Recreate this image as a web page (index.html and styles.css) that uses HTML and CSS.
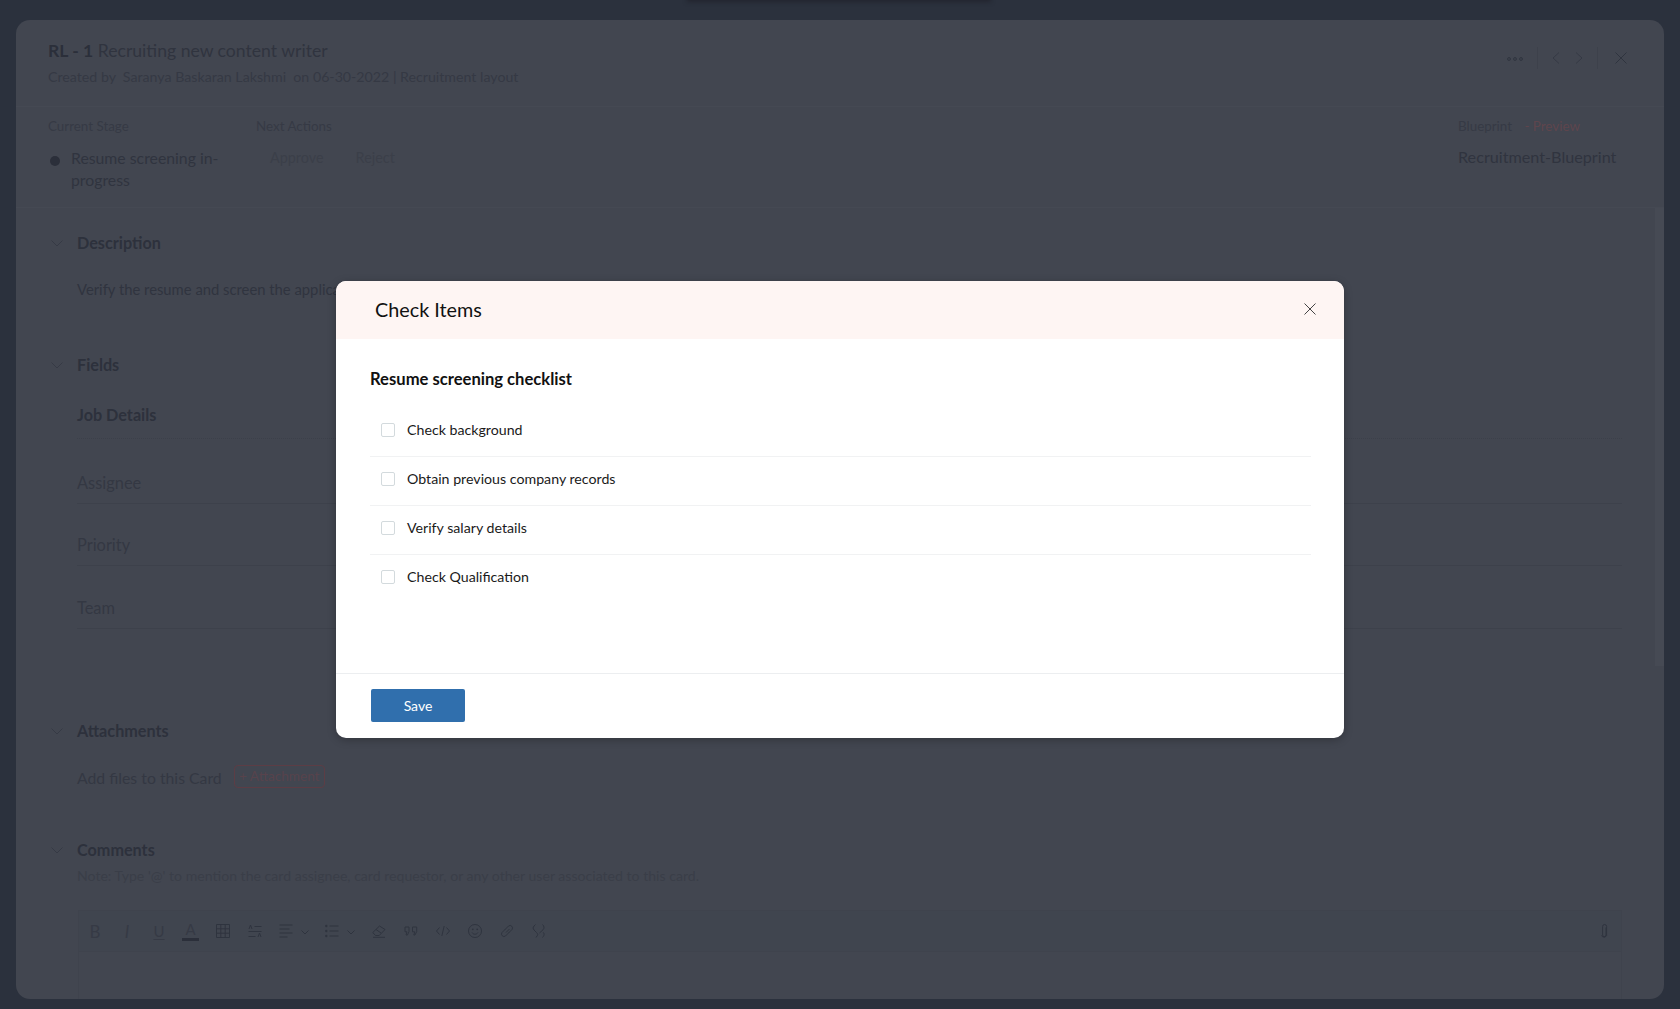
FILE: index.html
```html
<!DOCTYPE html>
<html lang="en">
<head>
<meta charset="utf-8">
<title>Check Items</title>
<link rel="stylesheet" href="styles.css">
</head>
<body>
<div class="top-shadow"></div>
<main class="card">
  <header class="card-head">
    <div>
      <h1 class="title"><b>RL - 1</b> Recruiting new content writer</h1>
      <p class="sub">Created by&nbsp; Saranya Baskaran Lakshmi&nbsp; on 06-30-2022 | Recruitment layout</p>
    </div>
    <div class="head-actions">
      <svg class="ic dots" viewBox="0 0 16 4"><circle cx="2" cy="2" r="1.4"/><circle cx="8" cy="2" r="1.4"/><circle cx="14" cy="2" r="1.4"/></svg>
      <span class="vsep"></span>
      <svg class="ic nav" viewBox="0 0 8 12"><path d="M7 .5 1 6l6 5.500"/></svg>
      <svg class="ic nav" viewBox="0 0 8 12"><path d="M1 .5 7 6l-6 5.500"/></svg>
      <span class="vsep"></span>
      <svg class="ic cross" viewBox="0 0 12 12"><path d="M.5.5l11 11M11.500.5l-11 11"/></svg>
    </div>
  </header>
  <section class="stage">
    <div>
      <div class="label">Current Stage</div>
      <div class="stage-val"><span class="bullet"></span><span>Resume screening in-<br>progress</span></div>
    </div>
    <div>
      <div class="label">Next Actions</div>
      <div class="actions"><span>Approve</span><span>Reject</span></div>
    </div>
    <div>
      <div class="label">Blueprint <span class="preview">- Preview</span></div>
      <div class="bp-val">Recruitment-Blueprint</div>
    </div>
  </section>
  <div class="content">
    <div class="scroll-thumb"></div>
    <h2 class="sec first"><svg class="ic chev" viewBox="0 0 12 7"><path d="M.5.5 6 6 11.500.5"/></svg>Description</h2>
    <p class="desc">Verify the resume and screen the applicant</p>
    <h2 class="sec fields"><svg class="ic chev" viewBox="0 0 12 7"><path d="M.5.5 6 6 11.500.5"/></svg>Fields</h2>
    <h3 class="group">Job Details</h3>
    <div class="field">Assignee</div>
    <div class="field">Priority</div>
    <div class="field">Team</div>
    <h2 class="sec attach"><svg class="ic chev" viewBox="0 0 12 7"><path d="M.5.5 6 6 11.500.5"/></svg>Attachments</h2>
    <div class="attach-row"><span class="attach-text">Add files to this Card</span><span class="attach-btn">+ Attachment</span></div>
    <h2 class="sec comments"><svg class="ic chev" viewBox="0 0 12 7"><path d="M.5.5 6 6 11.500.5"/></svg>Comments</h2>
    <p class="note">Note: Type '@' to mention the card assignee, card requestor, or any other user associated to this card.</p>
    <div class="editor">
      <div class="toolbar">
        <span class="tool glyph">B</span>
        <span class="tool glyph ital">I</span>
        <span class="tool glyph under">U</span>
        <span class="tool glyph color">A</span>
        <span class="tool"><svg class="ic t" viewBox="0 0 14 14"><path d="M.5.5h13v13H.5zM.5 4.800h13M.5 9.200h13M4.800.5v13M9.200.5v13"/></svg></span>
        <span class="tool"><svg class="ic t" viewBox="0 0 14 14"><path d="M1 5l1.500-4L4 5M6.500 2.500h7M.5 7.500h13M.5 12.500h7M10 13l1.500-4 1.500 4"/></svg></span>
        <span class="tool wide"><svg class="ic t" viewBox="0 0 14 14"><path d="M.5 1h13M.5 5h10M.5 9h13M.5 13h8"/></svg><svg class="ic mini" viewBox="0 0 8 5"><path d="M.5.5 4 4 7.500.5"/></svg></span>
        <span class="tool wide"><svg class="ic t" viewBox="0 0 14 14"><path d="M4.500 2h9M4.500 7h9M4.500 12h9"/><circle class="fill" cx="1.300" cy="2" r="1.200"/><circle class="fill" cx="1.300" cy="7" r="1.200"/><circle class="fill" cx="1.300" cy="12" r="1.200"/></svg><svg class="ic mini" viewBox="0 0 8 5"><path d="M.5.5 4 4 7.500.5"/></svg></span>
        <span class="tool"><svg class="ic t" viewBox="0 0 14 14"><path d="M.8 8.500 7.500 2l5.500 3.500-5.800 6H3.500zM4 5.500l5 3.500M1 13.300h12"/></svg></span>
        <span class="tool"><svg class="ic t" viewBox="0 0 14 14"><path d="M1 3h4v4.500L3.500 11H2l1-3.200H1zM8.500 3h4.200v4.500L11 11H9.800l1-3.200H8.500z"/></svg></span>
        <span class="tool"><svg class="ic t" viewBox="0 0 14 14"><path d="M3.500 3.500.5 7l3 3.500M10.500 3.500l3 3.500-3 3.500M8.200 2 5.800 12"/></svg></span>
        <span class="tool"><svg class="ic t" viewBox="0 0 14 14"><circle cx="7" cy="7" r="6.500"/><circle class="fill" cx="4.800" cy="5.300" r=".9"/><circle class="fill" cx="9.200" cy="5.300" r=".9"/><path d="M4 8.500c1.500 2.300 4.500 2.300 6 0"/></svg></span>
        <span class="tool"><svg class="ic t" viewBox="0 0 14 14"><path d="M6 8.500l3.500-3.500M5.500 5 2 8.500a2.500 2.500 0 0 0 3.500 3.500L9 8.500M5 5.500 8.500 2A2.500 2.500 0 0 1 12 5.500L8.500 9"/></svg></span>
        <span class="tool"><svg class="ic t" viewBox="0 0 14 14"><path d="M3.500.5 2 2a2.800 2.800 0 0 0 0 4l2.500 2.500c1.500 1.500 1.500 2.500.5 3.500l-1 1.500M10.500.5c1.800 1.500 2 3.800.5 5.300L7.500 9M10.500 13.500l.8-1c1.200-1.500 1-3-.1-4.200"/></svg></span>
        <svg class="ic clip" viewBox="0 0 7 16"><path d="M5 4.500v7.500a1.700 1.700 0 0 1-3.400 0V3.500a2 2 0 0 1 4 0v9a2.800 2.800 0 0 1-5.100 0"/></svg>
      </div>
    </div>
  </div>
</main>
<div class="modal">
  <div class="modal-head">
    <h2 class="modal-title">Check Items</h2>
    <svg class="modal-close" viewBox="0 0 12 12"><path d="M.5.5l11 11M11.500.5l-11 11"/></svg>
  </div>
  <div class="modal-body">
    <h3 class="list-title">Resume screening checklist</h3>
    <ul class="list">
      <li><span class="box"></span>Check background</li>
      <li><span class="box"></span>Obtain previous company records</li>
      <li><span class="box"></span>Verify salary details</li>
      <li><span class="box"></span>Check Qualification</li>
    </ul>
  </div>
  <div class="modal-foot"><button class="save">Save</button></div>
</div>
</body>
</html>
```
FILE: styles.css
```css
* { box-sizing: border-box; }
html, body { height: 100%; margin: 0; }
body {
  background: #2b313d;
  padding: 20px 16px 10px;
  overflow: hidden;
  font-family: Lato, "Open Sans", sans-serif;
  color: #2f343f;
}
h1, h2, h3, p, ul { margin: 0; padding: 0; }
.top-shadow {
  position: absolute; left: 688px; top: -12px; width: 302px; height: 12px;
  background: #23252f; box-shadow: 0 1px 4px 1px #23252f;
}
.card {
  height: 979px; background: #424650; border-radius: 14px; overflow: hidden;
  display: flex; flex-direction: column;
}
.ic { fill: none; stroke: #2f343f; stroke-width: 1; display: block; }
.ic .fill { fill: #2f343f; stroke: none; }

.card-head {
  height: 87px; flex: none; padding: 19px 32px 0; display: flex; justify-content: space-between;
  border-bottom: 1px solid #454953;
}
.title { font-size: 17.6px; line-height: 24px; font-weight: 400; color: #30343f; }
.title b { font-weight: 700; color: #2b2f3a; }
.sub { font-size: 14.2px; line-height: 20px; margin-top: 4px; color: #353944; }
.head-actions { display: flex; align-items: center; height: 20px; margin-top: 9px; padding-right: 5px; }
.dots { width: 16px; height: 4px; margin-top: 2px; }
.dots circle { stroke-width: 1; fill: none; stroke: #2f343f; }
.vsep { width: 1px; height: 22px; background: #3d414b; margin: 0 14px; }
.nav { width: 8px; height: 12px; stroke: #363a45; }
.nav + .nav { margin-left: 15px; }
.nav + .vsep { margin: 0 17px 0 14px; }
.cross { width: 12px; height: 12px; stroke: #2f343f; }

.stage {
  height: 101px; flex: none; padding: 10px 0 0 32px; display: grid; grid-template-columns: 208px 1fr 206px;
  border-bottom: 1px solid #454953;
}
.label { font-size: 13.4px; line-height: 18px; color: #363a45; }
.preview { color: #5e454d; margin-left: 9px; }
.stage-val { display: flex; margin-top: 12px; font-size: 15.8px; line-height: 22px; color: #30343f; }
.bullet { width: 10px; height: 10px; border-radius: 50%; background: #2b2f3a; margin: 9px 11px 0 2px; flex: none; }
.actions { display: flex; margin-top: 12px; font-size: 14.4px; line-height: 22px; color: #3b3f49; padding-left: 14px; gap: 32px; }
.bp-val { font-size: 16.2px; line-height: 22px; margin-top: 11px; color: #30343f; }

.content { position: relative; flex: 1; padding: 24px 42px 0 61px; min-height: 0; }
.scroll-thumb { position: absolute; right: 0; top: 0; width: 9px; height: 458px; background: #464a54; }
.sec { position: relative; font-size: 16.2px; line-height: 22px; font-weight: 700; color: #2d313c; }
.chev { position: absolute; left: -26px; top: 8px; width: 12px; height: 7px; stroke: #363a45; }
.desc { margin-top: 24px; font-size: 14.8px; line-height: 22px; color: #30343f; }
.fields { margin-top: 54px; }
.group {
  margin-top: 28px; font-size: 16.2px; line-height: 22px; font-weight: 700; color: #2d313c;
  padding-bottom: 12px; border-bottom: 1px dotted #3c404a; margin-bottom: 2px;
}
.field { height: 62.5px; display: flex; align-items: flex-end; padding-bottom: 9px; font-size: 16.4px; line-height: 22px; color: #343843; border-bottom: 1px solid #3d414b; }
.attach { margin-top: 91.5px; }
.attach-row { display: flex; align-items: center; margin-top: 22px; gap: 12px; }
.attach-text { font-size: 15.8px; line-height: 22px; color: #343843; margin-top: 3px; }
.attach-btn { height: 23px; width: 91px; text-align: center; border: 1px solid #5c3d45; border-radius: 4px; font-size: 13.6px; line-height: 21px; color: #57434c; }
.comments { margin-top: 50px; }
.note { margin-top: 6px; font-size: 14.1px; line-height: 18px; color: #3a3e48; }
.editor { margin-top: 25px; height: 100px; border: 1px solid #3f434d; margin-left: 1px; }
.toolbar { height: 41px; background: #40454f; border-bottom: 1px solid #3f434d; display: flex; align-items: center; padding-right: 10px; }
.tool { width: 32px; display: flex; justify-content: center; align-items: center; height: 20px; }
.tool.wide { width: 46px; justify-content: flex-start; padding-left: 8px; gap: 8px; }
.t { width: 14px; height: 14px; }
.mini { width: 8px; height: 5px; margin-top: 2px; }
.glyph { font-size: 17px; color: #363a45; }
.ital { font-style: italic; }
.under { text-decoration: underline; text-underline-offset: 2px; text-decoration-thickness: 1px; font-size: 15px; }
.color { font-size: 15px; border-bottom: 3px solid #2b2f3a; height: 19px; width: 17px; margin: 0 8px 0 7px; align-items: flex-end; line-height: 14px; padding-bottom: 2px; }
.clip { width: 7px; height: 16px; margin-left: auto; stroke: #2f343f; margin-right: 3px; }

.modal {
  position: absolute; left: 336px; top: 281px; width: 1008px; height: 457px;
  background: #fff; border-radius: 10px; overflow: hidden;
  display: flex; flex-direction: column; color: #111;
  box-shadow: 0 2px 8px rgba(0,0,0,.25);
}
.modal-head {
  height: 58px; flex: none; background: #fef5f3; padding: 0 25px 3px 39px;
  display: flex; align-items: center; justify-content: space-between;
}
.modal-title { font-size: 19.8px; font-weight: 400; line-height: 24px; color: #111; }
.modal-close { width: 12px; height: 12px; fill: none; stroke: #444; stroke-width: 1; margin-right: 3px; }
.modal-body { flex: 1; padding: 29px 33px 0 34px; min-height: 0; }
.list-title { font-size: 16.6px; font-weight: 700; line-height: 22px; color: #111; }
.list { list-style: none; margin-top: 18px; }
.list li {
  height: 49px; display: flex; align-items: center; font-size: 14.2px; color: #1a1a1a;
  padding: 0 0 6px 11px; border-bottom: 1px solid #f1f2f3;
}
.list li:last-child { border-bottom: 0; }
.box { width: 14px; height: 14px; border: 1px solid #d3dadd; border-radius: 2px; margin: 1px 12px 0 0; flex: none; }
.modal-foot { height: 65px; flex: none; border-top: 1px solid #eceef0; padding: 15px 0 0 35px; }
.save {
  display: block; width: 94px; height: 33px; background: #306fad; border: 0; border-radius: 2px;
  font-family: inherit; font-size: 14px; color: #fff; padding: 0;
}
```
